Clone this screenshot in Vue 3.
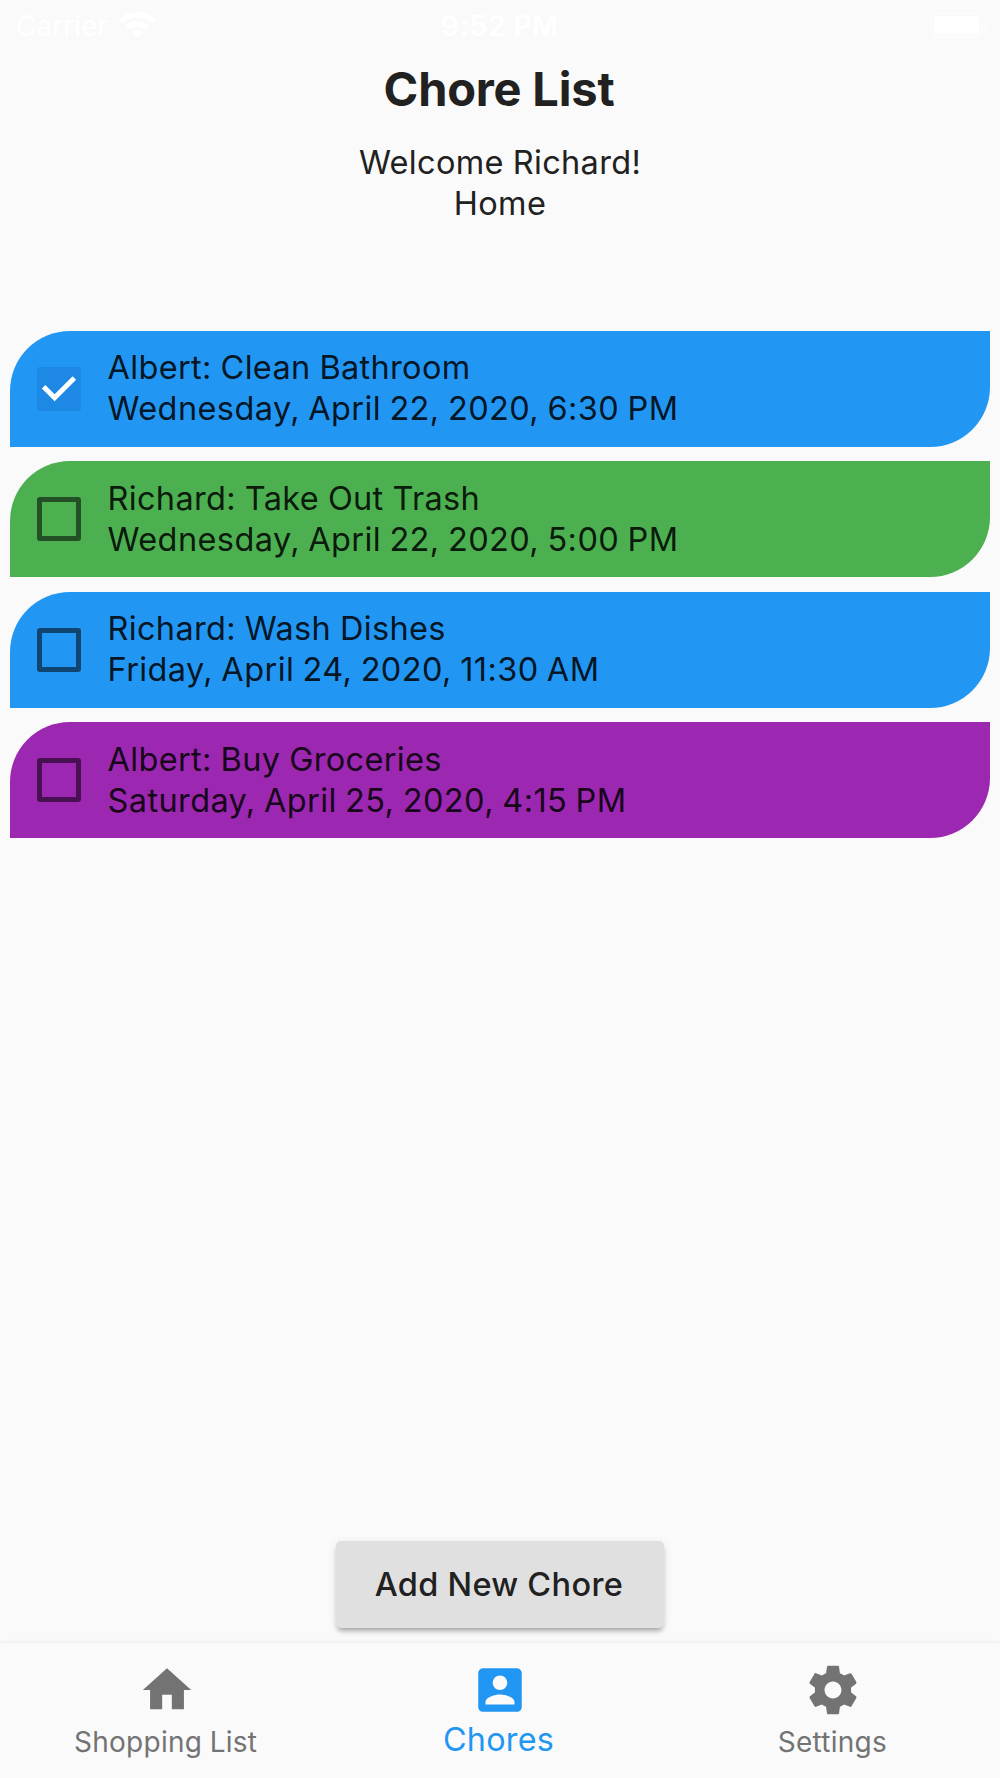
<template>
  <div class="screen">
    <header class="status-bar">
      <div class="carrier">
        <span>Carrier</span>
        <svg class="wifi" viewBox="0 0 37 26">
          <path d="M18.5 0C25.6 0 32 2.8 36.8 7.4L32.9 11.4C29.1 7.8 24.1 5.6 18.5 5.6S7.9 7.8 4.1 11.4L.2 7.4C5 2.8 11.4 0 18.5 0z" />
          <path d="M18.5 9C23.2 9 27.4 10.9 30.5 13.8L26.6 17.8C24.5 15.8 21.6 14.6 18.5 14.6S12.5 15.8 10.4 17.8L6.5 13.8C9.6 10.9 13.8 9 18.5 9z" />
          <path d="M18.5 17.8C20.8 17.8 22.8 18.7 24.3 20.1L18.5 26L12.7 20.1C14.2 18.7 16.2 17.8 18.5 17.8z" />
        </svg>
      </div>
      <div class="time">9:52 PM</div>
      <svg class="battery" viewBox="0 0 58 26">
        <rect x="1.2" y="1.2" width="50.6" height="23.6" rx="6" class="shell" />
        <rect x="4" y="4" width="45" height="18" rx="3.5" />
        <path d="M54 9c3 1 4 2.5 4 4s-1 3-4 4z" class="cap" />
      </svg>
    </header>

    <h1 class="title">Chore List</h1>
    <div class="welcome">
      <div>Welcome {{ user }}!</div>
      <div>{{ household }}</div>
    </div>

    <ul class="chores">
      <li v-for="chore in chores" :key="chore.id" class="chore" :class="chore.color">
        <span class="checkbox" :class="{ checked: chore.done }" @click="chore.done = !chore.done">
          <svg v-if="chore.done" viewBox="0 0 18 18">
            <path d="M2.7 8.1L7.2 12.6L15.3 4.5" />
          </svg>
        </span>
        <div class="chore-text">
          <div>{{ chore.person }}: {{ chore.task }}</div>
          <div class="due">{{ chore.due }}</div>
        </div>
      </li>
    </ul>

    <button class="add-button">Add New Chore</button>

    <nav class="nav">
      <a
        v-for="tab in tabs"
        :key="tab.label"
        class="tab"
        :class="{ active: tab.label === current }"
        @click="current = tab.label"
      >
        <svg viewBox="0 0 24 24"><path :d="tab.icon" /></svg>
        <span>{{ tab.label }}</span>
      </a>
    </nav>
  </div>
</template>

<script setup>
import { ref } from 'vue'

const user = 'Richard'
const household = 'Home'
const current = ref('Chores')

const chores = ref([
  { id: 1, person: 'Albert', task: 'Clean Bathroom', due: 'Wednesday, April 22, 2020, 6:30 PM', color: 'blue', done: true },
  { id: 2, person: 'Richard', task: 'Take Out Trash', due: 'Wednesday, April 22, 2020, 5:00 PM', color: 'green', done: false },
  { id: 3, person: 'Richard', task: 'Wash Dishes', due: 'Friday, April 24, 2020, 11:30 AM', color: 'blue', done: false },
  { id: 4, person: 'Albert', task: 'Buy Groceries', due: 'Saturday, April 25, 2020, 4:15 PM', color: 'purple', done: false },
])

const tabs = [
  { label: 'Shopping List', icon: 'M10 20v-6h4v6h5v-8h3L12 3 2 12h3v8z' },
  {
    label: 'Chores',
    icon: 'M3 5v14c0 1.1.89 2 2 2h14c1.1 0 2-.9 2-2V5c0-1.1-.9-2-2-2H5c-1.11 0-2 .9-2 2zm12 4c0 1.66-1.34 3-3 3s-3-1.34-3-3 1.34-3 3-3 3 1.34 3 3zm-9 8c0-2 4-3.1 6-3.1s6 1.1 6 3.1v1H6v-1z',
  },
  {
    label: 'Settings',
    icon: 'M19.43 12.98c.04-.32.07-.64.07-.98s-.03-.66-.07-.98l2.11-1.65c.19-.15.24-.42.12-.64l-2-3.46c-.12-.22-.39-.3-.61-.22l-2.49 1c-.52-.4-1.08-.73-1.69-.98l-.38-2.65C14.46 2.18 14.25 2 14 2h-4c-.25 0-.46.18-.49.42l-.38 2.65c-.61.25-1.17.59-1.69.98l-2.49-1c-.23-.09-.49 0-.61.22l-2 3.46c-.13.22-.07.49.12.64l2.11 1.65c-.04.32-.07.65-.07.98s.03.66.07.98l-2.11 1.65c-.19.15-.24.42-.12.64l2 3.46c.12.22.39.3.61.22l2.49-1c.52.4 1.08.73 1.69.98l.38 2.65c.03.24.24.42.49.42h4c.25 0 .46-.18.49-.42l.38-2.65c.61-.25 1.17-.59 1.69-.98l2.49 1c.23.09.49 0 .61-.22l2-3.46c.12-.22.07-.49-.12-.64l-2.11-1.65zM12 15.5c-1.93 0-3.5-1.57-3.5-3.5s1.57-3.5 3.5-3.5 3.5 1.57 3.5 3.5-1.57 3.5-3.5 3.5z',
  },
]
</script>

<style>
body {
  margin: 0;
  background: #fafafa;
}
</style>

<style scoped>
.screen {
  display: flex;
  flex-direction: column;
  width: 1000px;
  height: 1778px;
  overflow: hidden;
  background: #fafafa;
  color: #212121;
  font-family: Inter, Roboto, sans-serif;
  font-size: 32.5px;
  line-height: 41px;
  letter-spacing: 0.33px;
  word-spacing: -0.6px;
}
.status-bar {
  display: grid;
  grid-template-columns: 1fr auto 1fr;
  align-items: center;
  height: 50px;
  padding: 2px 12px 0 16px;
  box-sizing: border-box;
  color: #fff;
  font-size: 28px;
  letter-spacing: 0;
}
.carrier {
  display: flex;
  align-items: center;
  gap: 11px;
}
.time {
  margin-right: 4px;
  font-weight: 600;
  letter-spacing: 0.8px;
}
.wifi {
  width: 37px;
  height: 26px;
  margin-top: -3px;
  fill: #fff;
}
.battery {
  justify-self: end;
  width: 58px;
  height: 26px;
  margin-top: -2px;
  fill: #fff;
}
.shell {
  fill: none;
  stroke: #fff;
  stroke-width: 2.4;
  opacity: 0.4;
}
.cap {
  opacity: 0.4;
}
.title {
  margin: 10px 2px 0 0;
  font-size: 47px;
  line-height: 58px;
  font-weight: 700;
  letter-spacing: -0.2px;
  word-spacing: 0;
  text-align: center;
}
.welcome {
  margin-top: 24px;
  text-align: center;
}
.chores {
  display: flex;
  flex-direction: column;
  gap: 14.5px;
  margin: 107px 10px 0;
  padding: 0;
  list-style: none;
}
.chore {
  display: flex;
  align-items: center;
  height: 115.9px;
  padding-left: 27px;
  box-sizing: border-box;
  border-radius: 60px 0 60px 0;
  color: rgba(0, 0, 0, 0.87);
}
.blue {
  background: #2196f3;
}
.green {
  background: #4caf50;
}
.purple {
  background: #9c27b0;
}
.checkbox {
  flex: none;
  width: 44px;
  height: 44px;
  margin-right: 26.5px;
  box-sizing: border-box;
  border: 5px solid rgba(0, 0, 0, 0.54);
  border-radius: 3px;
}
.checkbox.checked {
  border: none;
  background: #1e88e5;
}
.checkbox svg {
  display: block;
  width: 44px;
  height: 44px;
  fill: none;
  stroke: #fff;
  stroke-width: 2;
}
.chore-text {
  margin-top: -1px;
}
.due {
  letter-spacing: 0.4px;
  word-spacing: -1.2px;
}
.add-button {
  align-self: center;
  width: 328px;
  height: 87px;
  margin-top: auto;
  margin-bottom: 15px;
  padding: 0 2px 0 0;
  border: none;
  border-radius: 5px;
  background: #e0e0e0;
  color: #212121;
  font: inherit;
  font-weight: 500;
  letter-spacing: 0.4px;
  word-spacing: -0.5px;
  box-shadow: 0 5px 4px -3px rgba(0, 0, 0, 0.2), 0 4px 5px 0 rgba(0, 0, 0, 0.12), 0 2px 10px 0 rgba(0, 0, 0, 0.08);
}
.nav {
  position: relative;
  display: grid;
  grid-template-columns: repeat(3, 1fr);
  height: 135px;
  background: #fafafa;
  box-shadow: 0 -1px 4px rgba(0, 0, 0, 0.07);
}
.tab {
  display: flex;
  flex-direction: column;
  align-items: center;
  padding-top: 18px;
  color: #737373;
  font-size: 28px;
  letter-spacing: 0.25px;
}
.tab svg {
  width: 58px;
  height: 58px;
  fill: currentColor;
}
.tab span {
  margin: 3px 2px 0 0;
}
.tab.active {
  color: #2196f3;
  font-size: 32.3px;
}
.tab.active span {
  margin: 0 3px 0 0;
}
</style>
